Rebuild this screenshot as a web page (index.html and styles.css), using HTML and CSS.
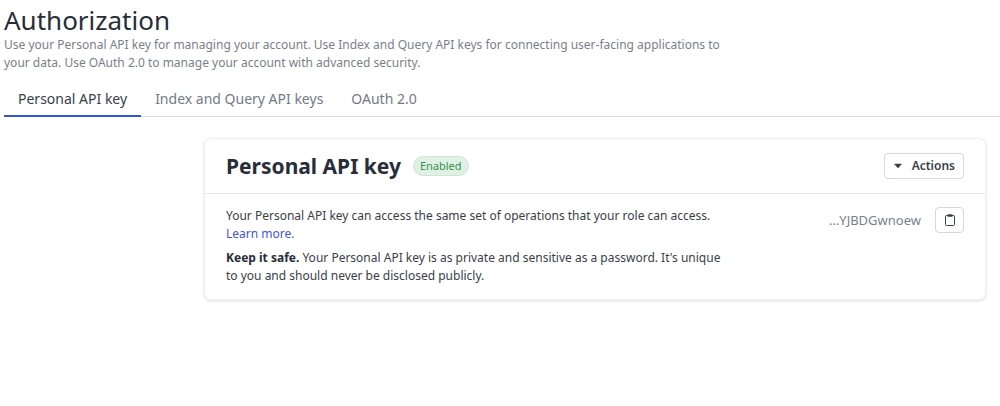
FILE: index.html
```html
<!DOCTYPE html>
<html lang="en">
<head>
<meta charset="utf-8">
<meta name="viewport" content="width=device-width, initial-scale=1">
<title>Authorization</title>
<link rel="stylesheet" href="styles.css">
</head>
<body>
<header class="page-header">
  <h1 class="page-title">Authorization</h1>
  <p class="page-intro">Use your Personal API key for managing your account. Use Index and Query API keys for connecting user-facing applications to<br>your data. Use OAuth 2.0 to manage your account with advanced security.</p>
</header>
<nav class="tabs" aria-label="Authorization">
  <a class="tab tab-active" href="#personal" aria-current="page">Personal API key</a>
  <a class="tab" href="#index-query">Index and Query API keys</a>
  <a class="tab" href="#oauth">OAuth 2.0</a>
</nav>
<main class="content">
  <section class="card" id="personal">
    <header class="card-header">
      <h2 class="card-title">Personal API key</h2>
      <span class="badge">Enabled</span>
      <button class="button actions" type="button">
        <svg class="caret" viewBox="0 0 10 6" aria-hidden="true"><path d="M1.5 1h7L5 5z" fill="currentColor" stroke="currentColor" stroke-width="0.5" stroke-linejoin="round"/></svg>
        Actions
      </button>
    </header>
    <div class="card-body">
      <div class="description">
        <p class="paragraph">Your Personal API key can access the same set of operations that your role can access.<br><a class="link" href="#learn">Learn more.</a></p>
        <p class="paragraph"><strong>Keep it safe.</strong> Your Personal API key is as private and sensitive as a password. It's unique<br>to you and should never be disclosed publicly.</p>
      </div>
      <div class="key">
        <span class="key-value">…YJBDGwnoew</span>
        <button class="button copy" type="button" aria-label="Copy key">
          <svg class="clipboard" viewBox="0 0 14 14" aria-hidden="true"><rect x="2.5" y="2.5" width="9" height="10" rx="1" fill="none" stroke="currentColor"/><path d="M4.5 2.2Q4.5 1.3 5.4 1.3h3.2q.9 0 .9.9v1.6h-5z" fill="currentColor"/></svg>
        </button>
      </div>
    </div>
  </section>
</main>
</body>
</html>
```

FILE: styles.css
```css
* { box-sizing: border-box; }
body {
  margin: 0;
  background: #fff;
  color: #3a3e48;
  font: 12px/18px "Noto Sans", "Open Sans", sans-serif;
}
h1, h2, p { margin: 0; }
.page-header { padding: 4px 4px 0; }
.page-title { color: #282d3a; font-size: 26px; line-height: 32px; font-weight: 400; }
.page-intro { color: #7a7f8a; }
.tabs {
  display: flex;
  margin: 9px 0 0 4px;
  border-bottom: 1px solid #d4d6e4;
}
.tab {
  padding: 9px 14px 7px;
  margin-bottom: -1px;
  border-bottom: 2px solid transparent;
  color: #757a85;
  font-size: 14px;
  text-decoration: none;
}
.tab-active { color: #3a3e48; border-color: #3056d3; }
.content { padding: 21px 14px 21px 204px; }
.card {
  border: 1px solid #f0f0f3;
  border-radius: 7px;
  box-shadow: 0 1px 3px rgba(30, 35, 55, 0.16);
}
.card-header {
  display: flex;
  align-items: center;
  padding: 13px 21px;
  border-bottom: 1px solid #e6e6f2;
}
.card-title { color: #282d3a; font-size: 21px; line-height: 28px; font-weight: 700; }
.badge {
  margin-left: 12px;
  padding: 0 6px;
  border: 1px solid #cfe6d3;
  border-radius: 10px;
  background: #e1f0e4;
  color: #35924a;
  font-size: 11px;
}
.button {
  display: flex;
  align-items: center;
  justify-content: center;
  height: 26px;
  border: 1px solid #d6d6e6;
  border-radius: 4px;
  background: #fff;
  color: #3a3e48;
  font: 600 12px/18px "Noto Sans", sans-serif;
}
.actions { margin-left: auto; padding: 0 8px; gap: 9px; }
.caret { width: 10px; height: 6px; }
.card-body {
  display: flex;
  justify-content: space-between;
  gap: 21px;
  padding: 13px 21px 14px;
}
.description { display: grid; gap: 6px; }
.description strong { color: #282d3a; }
.link { color: #3f55dc; text-decoration: none; }
.key { display: flex; align-items: center; align-self: flex-start; gap: 14px; }
.key-value { color: #7a7f8a; font-size: 13px; }
.copy { width: 29px; padding: 0; }
.clipboard { width: 14px; height: 14px; }
```
